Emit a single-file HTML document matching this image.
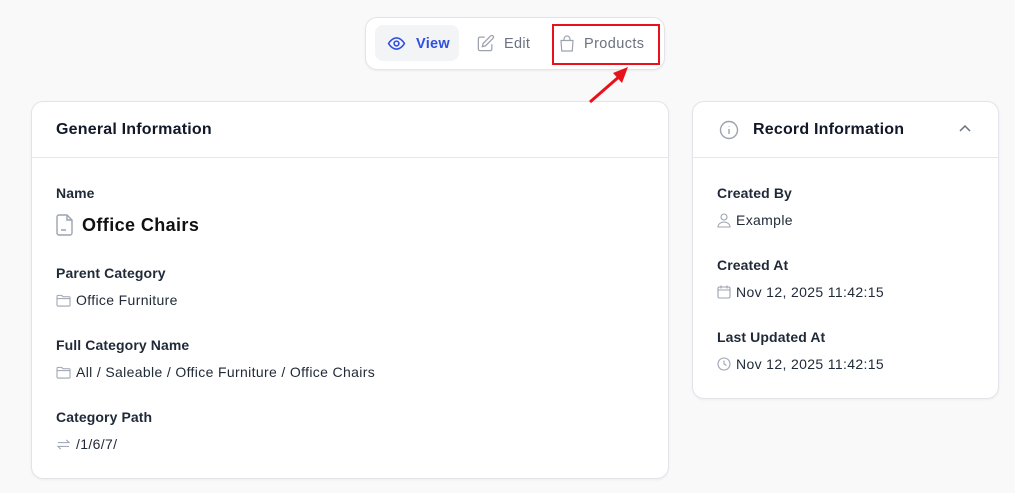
<!DOCTYPE html>
<html><head><style>
body{margin:0;width:1015px;height:493px;background:#f9f9fa;font-family:"Liberation Sans",sans-serif;position:relative;overflow:hidden;color:#111827}
.abs{position:absolute}
.card{position:absolute;background:#fff;border:1px solid #e3e4e8;border-radius:12px;box-shadow:0 1px 2px rgba(0,0,0,.05)}
.hd{position:absolute;left:0;right:0;top:0;height:55px;border-bottom:1px solid #e5e7eb}
.t{position:absolute;font-size:16px;font-weight:bold;color:#111827;letter-spacing:0.2px}
.lb{position:absolute;font-size:14px;font-weight:bold;color:#1f2937;letter-spacing:0.1px}
.v{position:absolute;font-size:14px;color:#1f2937;display:flex;align-items:center;gap:5px;letter-spacing:0.35px}
svg{display:block}
</style></head><body>
<div class="card" style="left:365px;top:17px;width:298px;height:51px;border-radius:12px"></div>
<div class="abs" style="left:375px;top:25px;width:84px;height:36px;background:#f3f4f6;border-radius:8px"></div>
<div class="abs" style="left:386px;top:34px;display:flex;align-items:center;gap:9px;color:#2f4fe0;font-size:14.5px;font-weight:bold;letter-spacing:0.3px">
<svg width="21" height="19" viewBox="0 0 24 24" fill="none" stroke="#2f4fe0" stroke-width="2"><path d="M2 12s4-7 10-7 10 7 10 7-4 7-10 7S2 12 2 12z"/><circle cx="12" cy="12" r="3"/></svg>View</div>
<div class="abs" style="left:476px;top:34px;display:flex;align-items:center;gap:9px;color:#6b7280;font-size:14.5px;letter-spacing:0.3px">
<svg width="19" height="19" viewBox="0 0 24 24" fill="none" stroke="#9ca3af" stroke-width="1.6"><path d="M11 4H5a2 2 0 0 0-2 2v13a2 2 0 0 0 2 2h13a2 2 0 0 0 2-2v-6"/><path d="M18.5 2.5a2.1 2.1 0 0 1 3 3L12 15l-4 1 1-4z"/></svg>Edit</div>
<div class="abs" style="left:558px;top:34px;display:flex;align-items:center;gap:8px;color:#6b7280;font-size:14.5px;letter-spacing:0.4px">
<svg width="18" height="19" viewBox="0 0 24 24" fill="none" stroke="#9ca3af" stroke-width="1.6"><path d="M4 8h16l-1 14H5z"/><path d="M8 8V6a4 4 0 0 1 8 0v2"/></svg>Products</div>
<div class="abs" style="left:552px;top:24px;width:104px;height:37px;border:2.5px solid #e8121b"></div>

<div class="card" style="left:31px;top:101px;width:636px;height:376px">
<div class="hd"></div>
<div class="t" style="left:24px;top:19px">General Information</div>
<div class="lb" style="left:24px;top:83px">Name</div>
<div class="v" style="left:24px;top:112px;font-size:18px;font-weight:bold;color:#111;gap:8px;letter-spacing:0.4px"><svg width="18" height="22" viewBox="0 0 18 22" fill="none" stroke="#9ca3af" stroke-width="1.4"><path d="M3 1h8l5 5v13a2 2 0 0 1-2 2H3a2 2 0 0 1-2-2V3a2 2 0 0 1 2-2z"/><path d="M11 1v5h5M5 16h5"/></svg>Office Chairs</div>
<div class="lb" style="left:24px;top:163px">Parent Category</div>
<div class="v" style="left:24px;top:190px"><svg width="15" height="13" viewBox="0 0 16 14" fill="none" stroke="#9ca3af" stroke-width="1.1"><path d="M1 2.5a1 1 0 0 1 1-1h4l1.5 1.5H14a1 1 0 0 1 1 1V12a1 1 0 0 1-1 1H2a1 1 0 0 1-1-1zM1 5h14"/></svg>Office Furniture</div>
<div class="lb" style="left:24px;top:235px">Full Category Name</div>
<div class="v" style="left:24px;top:262px"><svg width="15" height="13" viewBox="0 0 16 14" fill="none" stroke="#9ca3af" stroke-width="1.1"><path d="M1 2.5a1 1 0 0 1 1-1h4l1.5 1.5H14a1 1 0 0 1 1 1V12a1 1 0 0 1-1 1H2a1 1 0 0 1-1-1zM1 5h14"/></svg>All / Saleable / Office Furniture / Office Chairs</div>
<div class="lb" style="left:24px;top:307px">Category Path</div>
<div class="v" style="left:24px;top:334px"><svg width="15" height="13" viewBox="0 0 16 14" fill="none" stroke="#9ca3af" stroke-width="1.1"><path d="M2 5h12l-3-3M14 9H2l3 3"/></svg>/1/6/7/</div>
</div>

<div class="card" style="left:692px;top:101px;width:305px;height:296px">
<div class="hd"></div>
<svg class="abs" style="left:26px;top:18px" width="20" height="20" viewBox="0 0 20 20" fill="none" stroke="#9ca3af" stroke-width="1.4"><circle cx="10" cy="10" r="8.5"/><path d="M10 9v5M10 6v.5"/></svg>
<div class="t" style="left:60px;top:19px">Record Information</div>
<svg class="abs" style="left:266px;top:23px" width="12" height="8" viewBox="0 0 12 8" fill="none" stroke="#6b7280" stroke-width="1.5"><path d="M1 6l5-5 5 5"/></svg>
<div class="lb" style="left:24px;top:83px">Created By</div>
<div class="v" style="left:24px;top:110px"><svg width="14" height="15" viewBox="0 0 14 15" fill="none" stroke="#9ca3af" stroke-width="1.1"><circle cx="7" cy="4" r="3"/><path d="M1 14c0-3 3-5 6-5s6 2 6 5z"/></svg>Example</div>
<div class="lb" style="left:24px;top:155px">Created At</div>
<div class="v" style="left:24px;top:182px"><svg width="14" height="14" viewBox="0 0 14 14" fill="none" stroke="#9ca3af" stroke-width="1.1"><rect x="1" y="2" width="12" height="11" rx="1.5"/><path d="M1 5h12M4 .5v3M10 .5v3"/></svg>Nov 12, 2025 11:42:15</div>
<div class="lb" style="left:24px;top:227px">Last Updated At</div>
<div class="v" style="left:24px;top:254px"><svg width="14" height="14" viewBox="0 0 14 14" fill="none" stroke="#9ca3af" stroke-width="1.1"><circle cx="7" cy="7" r="6"/><path d="M7 3.5V7l2.5 1.5"/></svg>Nov 12, 2025 11:42:15</div>
</div>
<svg class="abs" style="left:585px;top:63px;z-index:5" width="50" height="42"><line x1="5" y1="39" x2="36" y2="12" stroke="#e8121b" stroke-width="3"/><polygon points="43,4 28,10 37,20" fill="#e8121b"/></svg>
</body></html>
